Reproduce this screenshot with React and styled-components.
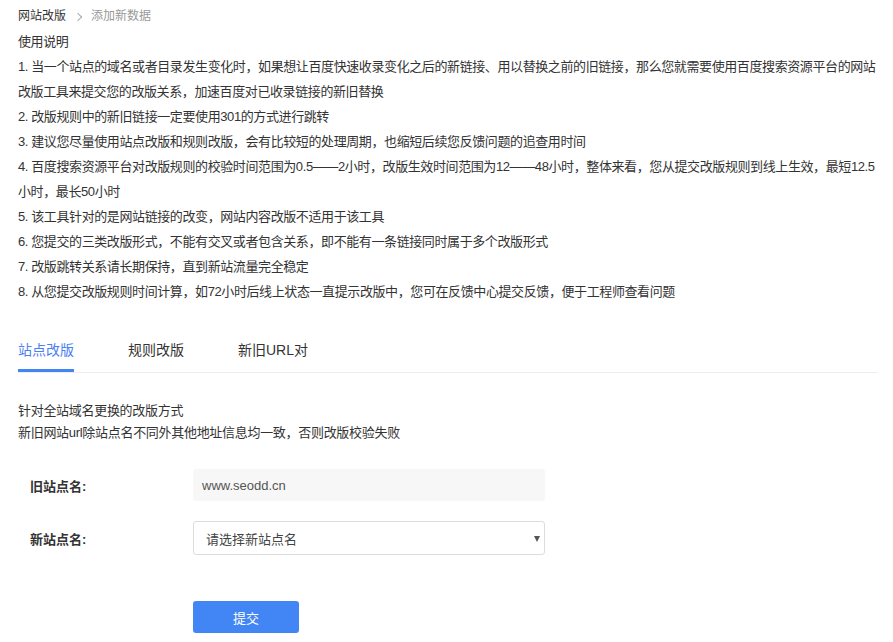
import React, { useState } from "react";
import styled, { createGlobalStyle } from "styled-components";

const GlobalStyle = createGlobalStyle`
  body {
    margin: 0;
    background: #fff;
    font-family: "Liberation Sans", "Noto Sans CJK SC", sans-serif;
    color: #333;
  }
`;

const notes = [
  ["1. 当一个站点的域名或者目录发生变化时，如果想让百度快速收录变化之后的新链接、用以替换之前的旧链接，那么您就需要使用百度搜索资源平台的网站", "改版工具来提交您的改版关系，加速百度对已收录链接的新旧替换"],
  ["2. 改版规则中的新旧链接一定要使用301的方式进行跳转"],
  ["3. 建议您尽量使用站点改版和规则改版，会有比较短的处理周期，也缩短后续您反馈问题的追查用时间"],
  ["4. 百度搜索资源平台对改版规则的校验时间范围为0.5——2小时，改版生效时间范围为12——48小时，整体来看，您从提交改版规则到线上生效，最短12.5", "小时，最长50小时"],
  ["5. 该工具针对的是网站链接的改变，网站内容改版不适用于该工具"],
  ["6. 您提交的三类改版形式，不能有交叉或者包含关系，即不能有一条链接同时属于多个改版形式"],
  ["7. 改版跳转关系请长期保持，直到新站流量完全稳定"],
  ["8. 从您提交改版规则时间计算，如72小时后线上状态一直提示改版中，您可在反馈中心提交反馈，便于工程师查看问题"],
];

const tabs = ["站点改版", "规则改版", "新旧URL对"];

const Page = styled.div`
  width: 860px;
  padding: 4px 0 0 18px;
`;

const Crumbs = styled.div`
  display: flex;
  align-items: center;
  font-size: 12px;
  line-height: 25px;
`;

const Crumb = styled.span`
  color: ${(p) => (p.$muted ? "#999" : "#333")};
`;

const Sep = styled.span`
  display: inline-block;
  width: 5px;
  height: 5px;
  border-top: 1px solid #aaa;
  border-right: 1px solid #aaa;
  transform: rotate(45deg);
  margin: 0 10px 0 9px;
`;

const Notes = styled.div`
  font-size: 13px;
  line-height: 25px;
  letter-spacing: -0.4px;
  color: #333;
  white-space: nowrap;
`;

const TabBar = styled.div`
  display: flex;
  gap: 54px;
  margin-top: 36px;
  border-bottom: 1px solid #eeeeee;
`;

const Tab = styled.div`
  font-size: 14px;
  line-height: 20px;
  padding-bottom: 9px;
  border-bottom: 3px solid ${(p) => (p.$active ? "#4285f4" : "transparent")};
  color: ${(p) => (p.$active ? "#4a7ff5" : "#333")};
  cursor: pointer;
`;

const Desc = styled.div`
  margin-top: 27px;
  font-size: 13px;
  line-height: 22px;
  letter-spacing: -0.3px;
  color: #333;
`;

const Form = styled.div`
  margin-top: 25px;
  padding-left: 12px;
  display: flex;
  flex-direction: column;
  gap: 20px;
`;

const Row = styled.div`
  display: flex;
  align-items: center;
`;

const Label = styled.div`
  width: 163px;
  font-size: 13px;
  font-weight: 700;
  color: #333;
`;

const ReadOnly = styled.div`
  width: 352px;
  height: 32px;
  box-sizing: border-box;
  padding-left: 9px;
  display: flex;
  align-items: center;
  background: #f7f7f7;
  border-radius: 3px;
  font-size: 13px;
  color: #555;
`;

const Select = styled.div`
  position: relative;
  width: 352px;
  height: 34px;
  box-sizing: border-box;
  padding-left: 12px;
  display: flex;
  align-items: center;
  border: 1px solid #dddddd;
  border-radius: 3px;
  font-size: 13px;
  color: #444;
  background: #fff;
`;

const Arrow = styled.span`
  position: absolute;
  right: 4px;
  top: 14px;
  width: 0;
  height: 0;
  border-left: 3.5px solid transparent;
  border-right: 3.5px solid transparent;
  border-top: 6px solid #555;
`;

const Submit = styled.button`
  margin: 26px 0 0 163px;
  width: 106px;
  height: 32px;
  border: none;
  border-radius: 3px;
  background: #4285f4;
  color: #fff;
  font-family: "Noto Sans CJK SC", sans-serif;
  font-size: 13px;
  cursor: pointer;
`;

export default function App() {
  const [active, setActive] = useState(0);

  return (
    <>
      <GlobalStyle />
      <Page>
        <Crumbs>
          <Crumb>网站改版</Crumb>
          <Sep />
          <Crumb $muted>添加新数据</Crumb>
        </Crumbs>
        <Notes>
          <div>使用说明</div>
          {notes.map((lines, i) =>
            lines.map((line, j) => <div key={`${i}-${j}`}>{line}</div>)
          )}
        </Notes>
        <TabBar>
          {tabs.map((t, i) => (
            <Tab key={t} $active={i === active} onClick={() => setActive(i)}>
              {t}
            </Tab>
          ))}
        </TabBar>
        <Desc>
          <div>针对全站域名更换的改版方式</div>
          <div>新旧网站url除站点名不同外其他地址信息均一致，否则改版校验失败</div>
        </Desc>
        <Form>
          <Row>
            <Label>旧站点名:</Label>
            <ReadOnly>www.seodd.cn</ReadOnly>
          </Row>
          <Row>
            <Label>新站点名:</Label>
            <Select>
              请选择新站点名
              <Arrow />
            </Select>
          </Row>
          <Submit>提交</Submit>
        </Form>
      </Page>
    </>
  );
}
